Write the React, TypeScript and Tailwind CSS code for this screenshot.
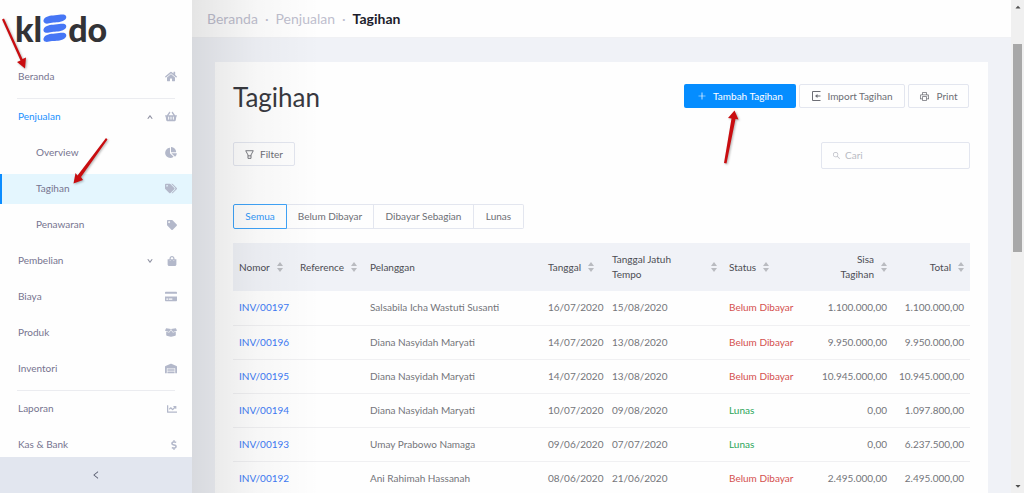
import type { IconType } from "react-icons";
import {
  FaHome, FaShoppingBasket, FaChartPie, FaTags, FaTag, FaShoppingBag,
  FaCreditCard, FaBoxOpen, FaWarehouse, FaChartLine, FaDollarSign, FaCaretUp, FaCaretDown,
} from "react-icons/fa";
import {
  AiOutlinePlus, AiOutlinePrinter,
  AiOutlineSearch, AiOutlineLeft, AiOutlineUp, AiOutlineDown,
} from "react-icons/ai";

type Item = {
  label: string;
  icon: IconType;
  sub?: boolean;
  selected?: boolean;
  open?: boolean;
  closed?: boolean;
  divider?: boolean;
};

const menu: Item[] = [
  { label: "Beranda", icon: FaHome },
  { label: "Penjualan", icon: FaShoppingBasket, open: true, divider: true },
  { label: "Overview", icon: FaChartPie, sub: true },
  { label: "Tagihan", icon: FaTags, sub: true, selected: true },
  { label: "Penawaran", icon: FaTag, sub: true },
  { label: "Pembelian", icon: FaShoppingBag, closed: true },
  { label: "Biaya", icon: FaCreditCard },
  { label: "Produk", icon: FaBoxOpen },
  { label: "Inventori", icon: FaWarehouse },
  { label: "Laporan", icon: FaChartLine, divider: true },
  { label: "Kas & Bank", icon: FaDollarSign },
];

const rows = [
  ["INV/00197", "Salsabila Icha Wastuti Susanti", "16/07/2020", "15/08/2020", "Belum Dibayar", "1.100.000,00", "1.100.000,00"],
  ["INV/00196", "Diana Nasyidah Maryati", "14/07/2020", "13/08/2020", "Belum Dibayar", "9.950.000,00", "9.950.000,00"],
  ["INV/00195", "Diana Nasyidah Maryati", "14/07/2020", "13/08/2020", "Belum Dibayar", "10.945.000,00", "10.945.000,00"],
  ["INV/00194", "Diana Nasyidah Maryati", "10/07/2020", "09/08/2020", "Lunas", "0,00", "1.097.800,00"],
  ["INV/00193", "Umay Prabowo Namaga", "09/06/2020", "07/07/2020", "Lunas", "0,00", "6.237.500,00"],
  ["INV/00192", "Ani Rahimah Hassanah", "08/06/2020", "21/06/2020", "Belum Dibayar", "2.495.000,00", "2.495.000,00"],
];

function Logo() {
  return (
    <a href="#beranda" aria-label="kledo" className="flex h-[59px] items-start pl-[15px] pt-[9px] text-[34px] leading-10 font-black text-[#333336]">
      <span>kl</span>
      <svg viewBox="0 0 24 28" className="mx-px mt-[5px] h-7 w-6 shrink-0" fill="#4676f5" aria-hidden="true">
        <path d="M1 5C3 2.200 7 1.500 12 1.200C16 1 19 0 21.500 0.700C24 1.700 23.800 4.500 21.500 6C17 8.800 13 8 9 8.700C6 9.200 4 10.200 2 9.200C0.300 8.300 0 6.500 1 5Z" />
        <path d="M1 14.200C3 11.400 7 10.700 12 10.400C16 10.200 19 9.200 21.500 9.900C24 10.900 23.800 13.700 21.500 15.200C17 18 13 17.200 9 17.900C6 18.400 4 19.400 2 18.400C0.300 17.500 0 15.700 1 14.200Z" />
        <path d="M1 23.400C3 20.600 7 19.900 12 19.600C16 19.400 19 18.400 21.500 19.100C24 20.100 23.800 22.900 21.500 24.400C17 27.200 13 26.400 9 27.100C6 27.600 4 28.400 2 27.600C0.300 26.700 0 24.900 1 23.400Z" />
      </svg>
      <span>do</span>
    </a>
  );
}

function Sidebar() {
  return (
    <aside className="flex w-48 shrink-0 flex-col bg-[#fefefe]">
      <Logo />
      <nav className="min-h-0 flex-1 overflow-hidden">
        <ul>
          {menu.map(({ label, icon: Icon, sub, selected, open, closed, divider }) => (
            <li key={label} className="flex flex-col">
              {divider && <hr className="mx-[17px] mt-[3px] border-[#ebecf0]" />}
              <a
                href={"#" + label}
                className={`my-[3px] flex h-[30px] items-center border-l-2 pr-[15px] pb-px text-[10px] ${sub ? "pl-[34px]" : "pl-4"} ${selected ? "border-[#0b8cff] bg-[#e4f6fe]" : "border-transparent"} ${open ? "text-[#1890ff]" : "text-[#76748f]"}`}
              >
                <span className="flex-1">{label}</span>
                {open && <AiOutlineUp className="size-[6px] text-[#85889a]" strokeWidth={90} />}
                {closed && <AiOutlineDown className="size-[6px] text-[#85889a]" strokeWidth={90} />}
                <span className="flex w-6 justify-end text-[#b3b8ca]">
                  <Icon className={Icon === FaTag || Icon === FaShoppingBag || Icon === FaChartLine ? "size-[10px]" : Icon === FaDollarSign ? "h-[10px] w-[6px]" : "h-[11px] w-3"} />
                </span>
              </a>
            </li>
          ))}
        </ul>
      </nav>
      <button aria-label="Tutup menu" className="flex h-9 shrink-0 items-center justify-center bg-[#e2e6ef] text-[#54586b]">
        <AiOutlineLeft className="size-[10px]" />
      </button>
    </aside>
  );
}

function Sorter() {
  return (
    <svg viewBox="0 0 6 10" className="h-[10px] w-[6px] shrink-0" fill="#b9bbc0" aria-hidden="true">
      <path d="M3 0L6 4H0Z" />
      <path d="M3 10L0 6H6Z" />
    </svg>
  );
}

function ImportIcon() {
  return (
    <svg viewBox="0 0 10 10" className="size-[10px] shrink-0" fill="none" stroke="currentColor" aria-hidden="true">
      <path d="M9.500 0.500H1.500V9.500H9.500M9.500 5H5" />
      <path d="M6.500 3V7L4 5Z" fill="currentColor" stroke="none" />
    </svg>
  );
}

function FilterIcon() {
  return (
    <svg viewBox="0 0 10 10" className="size-[9px] shrink-0" fill="none" stroke="currentColor" aria-hidden="true">
      <path d="M0.800 0.800H9.200L6.700 5.500V9.300H3.300V5.500ZM3.300 6.500H6.700" />
    </svg>
  );
}

type HeadProps = { label: string; sort?: boolean; right?: boolean; spread?: boolean; narrow?: boolean };

function Head({ label, sort = true, right, spread, narrow }: HeadProps) {
  return (
    <th className="px-[6px] font-normal">
      <div className={`flex items-center gap-[7px] ${right ? "justify-end text-right" : spread ? "justify-between text-left" : "text-left"}`}>
        <span className={spread ? "w-[72px]" : narrow ? "w-10" : ""}>{label}</span>
        {sort && <Sorter />}
      </div>
    </th>
  );
}

function InvoiceTable() {
  return (
    <table className="mt-[14px] w-full table-fixed text-[10px] leading-[15px] text-[#74757a]">
      <colgroup>
        <col className="w-[61px]" />
        <col className="w-[70px]" />
        <col />
        <col className="w-16" />
        <col className="w-[117px]" />
        <col className="w-[92px]" />
        <col className="w-[78px]" />
        <col className="w-[77px]" />
      </colgroup>
      <thead>
        <tr className="h-12 bg-[#f0f2f7] text-[#4c4d54]">
          <Head label="Nomor" />
          <Head label="Reference" />
          <Head label="Pelanggan" sort={false} />
          <Head label="Tanggal" />
          <Head label="Tanggal Jatuh Tempo" spread />
          <Head label="Status" />
          <Head label="Sisa Tagihan" right narrow />
          <Head label="Total" right />
        </tr>
      </thead>
      <tbody className="whitespace-nowrap">
        {rows.map(([no, name, date, due, status, rest, total]) => (
          <tr key={no} className="h-[34px] border-b border-[#f0f0f2]">
            <td className="px-[6px]"><a href={"#" + no} className="text-[#3d7af5]">{no}</a></td>
            <td />
            <td className="px-[6px]">{name}</td>
            <td className="px-[6px]">{date}</td>
            <td className="px-[6px]">{due}</td>
            <td className={`px-[6px] ${status === "Lunas" ? "text-[#2ba55a]" : "text-[#d4504f]"}`}>{status}</td>
            <td className="px-[6px] text-right">{rest}</td>
            <td className="px-[6px] text-right">{total}</td>
          </tr>
        ))}
      </tbody>
    </table>
  );
}

const outline = "flex h-6 items-center justify-center gap-[6px] rounded-[2px] border border-[#e3e6ef] text-[10px] text-[#6d6e75]";

function Card() {
  return (
    <section className="bg-[#fefefe] px-[18px] pt-[22px]">
      <div className="flex items-start justify-between">
        <h1 className="-mt-[2px] text-[26px] leading-[30px] text-[#38393f]">Tagihan</h1>
        <div className="flex gap-[3px] pr-px">
          <button className="flex h-6 w-28 items-center justify-center gap-[6px] rounded-[2px] bg-[#058dff] text-[10px] text-white">
            <AiOutlinePlus className="size-[10px]" />Tambah Tagihan
          </button>
          <button className={`${outline} w-[106px]`}><ImportIcon />Import Tagihan</button>
          <button className={`${outline} w-[61px]`}><AiOutlinePrinter className="size-[11px]" />Print</button>
        </div>
      </div>
      <div className="mt-[30px] flex items-start justify-between">
        <button className={`${outline} w-[62px]`}><FilterIcon />Filter</button>
        <label className="flex h-[27px] w-[149px] items-center gap-1 rounded-[2px] border border-[#e3e6ef] px-[10px] text-[#b9bbc3]">
          <AiOutlineSearch className="size-[9px] shrink-0" />
          <input aria-label="Cari" placeholder="Cari" className="w-full min-w-0 bg-transparent text-[10px] outline-none placeholder:text-[#b9bbc3]" />
        </label>
      </div>
      <div className="mt-[35px] flex h-[25px] text-[10px] text-[#6d6e75]">
        <button className="w-[54px] rounded-l-[2px] border border-[#3fa3f8] text-[#2f97f8]">Semua</button>
        <button className="w-[87px] border-y border-r border-[#e3e6ef]">Belum Dibayar</button>
        <button className="w-[100px] border-y border-r border-[#e3e6ef]">Dibayar Sebagian</button>
        <button className="w-[50px] rounded-r-[2px] border-y border-r border-[#e3e6ef]">Lunas</button>
      </div>
      <InvoiceTable />
    </section>
  );
}

function Arrows() {
  return (
    <svg className="pointer-events-none absolute inset-0 h-full w-full drop-shadow-[1px_1px_1px_rgba(0,0,0,0.3)]" fill="#c90d10" aria-hidden="true">
      <path d="M2 19.500L4 18.500L22.500 59L26 57.500L25 68.500L17 62L20.500 60.500Z" />
      <path d="M106 138L107.500 139.500L81 177L83 180L73.500 183.500L75.500 173L77.500 175.500Z" />
      <path d="M724 163L726.500 163.500L735.500 119L738.500 119.500L734.500 110.500L728 118L731.500 118.500Z" />
    </svg>
  );
}

export default function App() {
  return (
    <div className="relative flex h-screen overflow-hidden bg-[#f0f2f7] font-['Lato',sans-serif]">
      <Sidebar />
      <main className="relative min-w-0 flex-1">
        <header className="h-[38px] border-b border-[#f0f1f4] bg-[#fefefe] px-[15px]">
          <nav className="flex h-full items-center gap-[7px] text-[14px] text-[#bfbfce]">
            <a href="#beranda">Beranda</a>
            <span>·</span>
            <a href="#penjualan">Penjualan</a>
            <span>·</span>
            <span className="font-bold text-[#1c1c2b]">Tagihan</span>
          </nav>
        </header>
        <div className="px-[23px] pt-6">
          <Card />
        </div>
        <div className="pointer-events-none absolute inset-y-0 left-0 w-32 bg-linear-to-r from-black/10 via-black/3 to-transparent" />
      </main>
      <div className="flex w-[13px] shrink-0 flex-col items-center bg-[#f0f0f0] text-[#505050]">
        <FaCaretUp className="mt-[3px] size-2" />
        <div className="mt-[33px] h-52 w-[9px] bg-[#a8a8a8]" />
        <FaCaretDown className="mt-auto mb-[3px] size-2" />
      </div>
      <Arrows />
    </div>
  );
}
